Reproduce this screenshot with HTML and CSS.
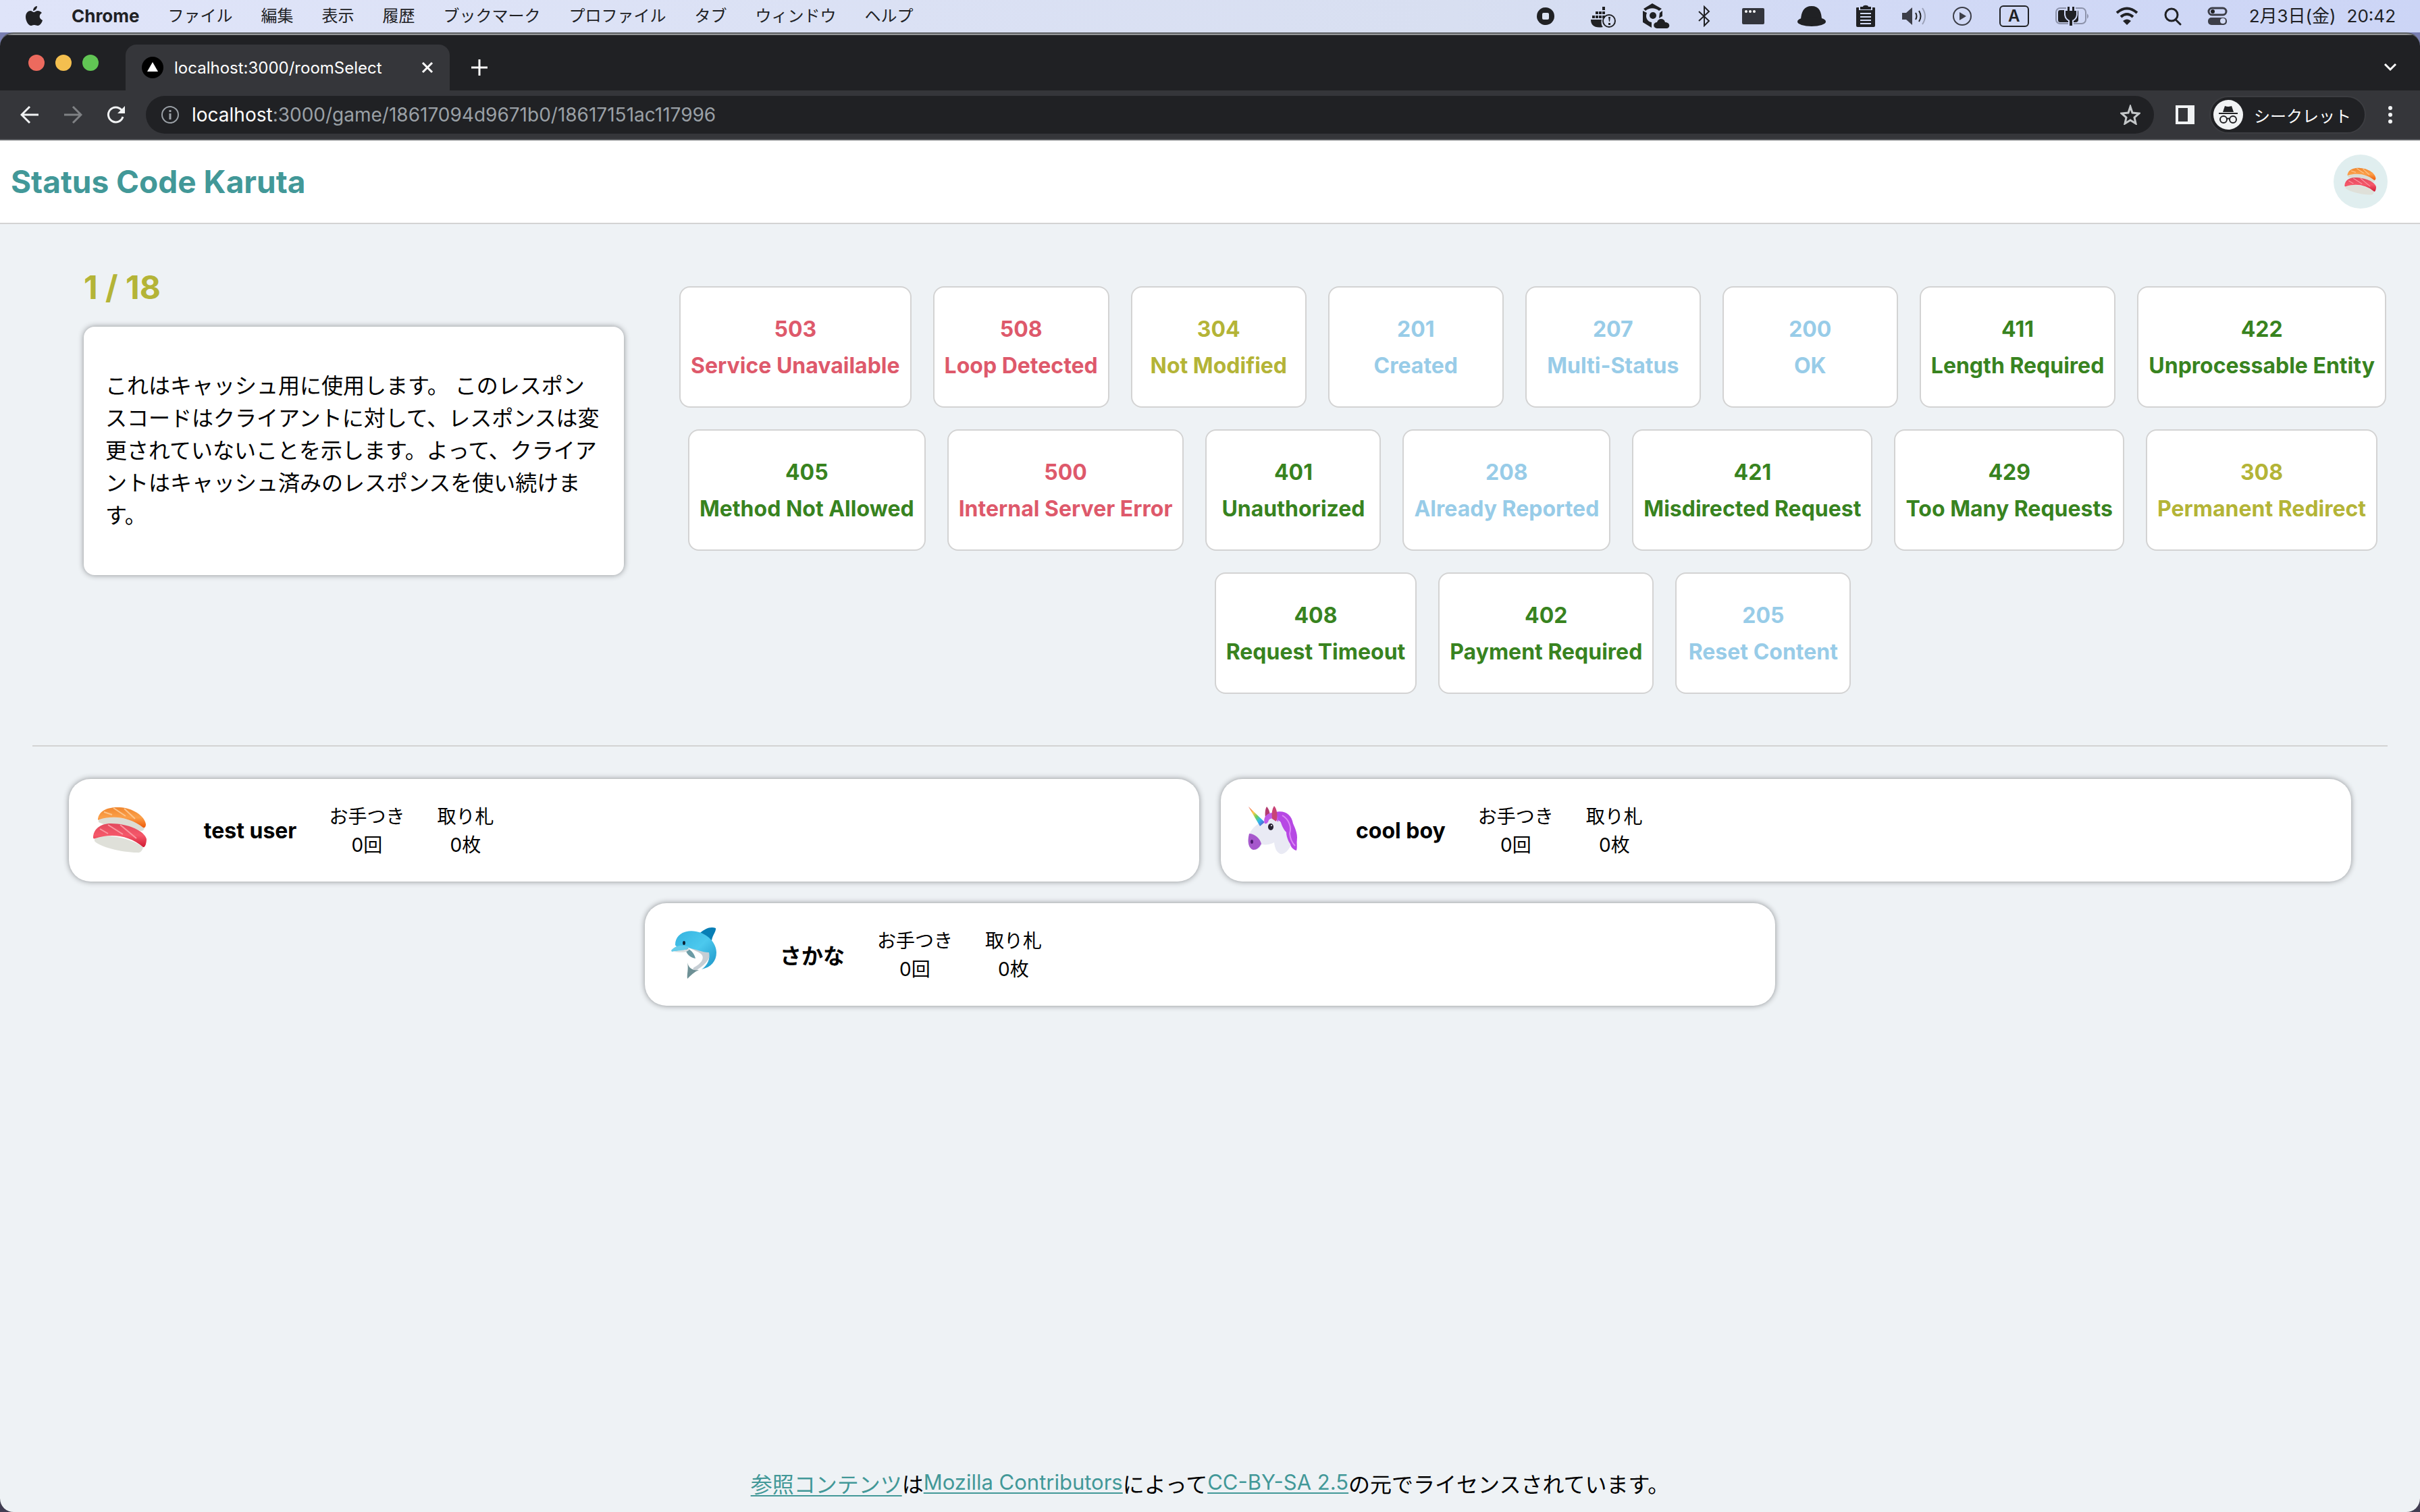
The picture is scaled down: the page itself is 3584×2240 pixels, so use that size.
FILE: index.html
```html
<!DOCTYPE html>
<html lang="ja">
<head>
<meta charset="utf-8">
<title>Status Code Karuta</title>
<link rel="stylesheet" href="styles.css">
</head>
<body>
<svg class="defs" aria-hidden="true">
  <defs>
    <linearGradient id="salmon" x1="0" y1="0" x2="0" y2="1"><stop offset="0" stop-color="#f0862e"/><stop offset=".5" stop-color="#fba04a"/><stop offset="1" stop-color="#ee5a08"/></linearGradient>
    <linearGradient id="tuna" x1="0" y1="0" x2="0" y2="1"><stop offset="0" stop-color="#e2495d"/><stop offset=".5" stop-color="#f5586a"/><stop offset="1" stop-color="#d01a33"/></linearGradient>
    <linearGradient id="horn" x1="0" y1="0" x2="1" y2="1"><stop offset="0" stop-color="#ef5350"/><stop offset=".3" stop-color="#ffca4b"/><stop offset=".5" stop-color="#6ed05a"/><stop offset=".7" stop-color="#2fb9ee"/><stop offset="1" stop-color="#6a35c9"/></linearGradient>
    <linearGradient id="dolphin-skin" x1="0" y1="0" x2="1" y2="1"><stop offset="0" stop-color="#35b3e0"/><stop offset=".5" stop-color="#4cc9ee"/><stop offset="1" stop-color="#1a93c6"/></linearGradient>
    <symbol id="sushi" viewBox="0 0 88 88">
      <path d="M12 26C30 20 66 28 80 38c0 4-1 7-5 7C52 40 22 38 12 32z" fill="#dcdcd4"/>
      <path d="M11 28C12 15 26 9 43 10c19 1 37 12 39 25 0 3-1 6-4 5C60 26 36 21 13 28c-1 1-2 1-2 0z" fill="url(#salmon)"/>
      <path d="M20 17l12 4M34 11l18 12M50 12l16 15" stroke="#fdc48a" stroke-width="2" fill="none"/>
      <path d="M6 55c20-7 56 2 72 14-1 5-4 9-9 8C46 77 12 68 6 60z" fill="#dfe0d9"/>
      <path d="M4 55C4 43 14 34 30 34c26 0 50 11 53 23 0 6-2 13-5 12C58 52 32 48 7 56c-2 1-3 0-3-1z" fill="url(#tuna)"/>
      <path d="M14 42l12 7M26 36l22 14M44 36l24 20" stroke="#fa98a2" stroke-width="2" fill="none"/>
    </symbol>
    <symbol id="unicorn" viewBox="0 0 88 88">
      <path d="M49 17c15-3 24 5 26 17 4 9 8 18 5 28 1 5 1 9 0 12-5-1-9-6-10-12L48 30z" fill="#b648e4"/>
      <path d="M36 9c4 4 6 12 4 20l-6-4c-1-7 0-13 2-16z" fill="#b23b70"/>
      <path d="M28 32C37 25 50 26 56 31c9 12 17 25 15 37-4 7-9 12-15 11-6-3-8-9-9-17-5 3-12 4-18 3-4 6-8 9-13 8-7-2-9-11-7-20C12 43 20 36 28 32z" fill="#e9eaf4"/>
      <path d="M9 9l24 23-7 6z" fill="url(#horn)"/>
      <path d="M10 49c8 0 16 7 18 15-3 6-7 9-12 9-7-2-9-12-6-24z" fill="#a657cc"/>
      <path d="M33 34c-3-9 3-16 13-16 6 3 8 8 7 14-4-6-10-7-14-3-1 4-3 6-6 5z" fill="#c05be8"/>
      <path d="M47 8c4 4 6 14 3 23l-6-4c-1-8 0-15 3-19z" fill="#c94376"/>
      <path d="M53 18c15 0 24 14 22 28 6 8 7 17 4 26-9-5-14-17-14-25-7-7-9-18-12-29z" fill="#b748e4"/>
      <path d="M59 22c10 6 14 17 11 27m0 0c1 9 4 14 8 18" stroke="#dc8af6" stroke-width="2" fill="none"/>
      <ellipse cx="42" cy="39" rx="4" ry="5" fill="#272331"/><circle cx="43" cy="37" r="1" fill="#fff"/>
      <ellipse cx="14" cy="61" rx="2" ry="3" fill="#4d1a70"/>
    </symbol>
    <symbol id="dolphin" viewBox="0 8 88 88">
      <path d="M31 64c2 8 7 12 17 11-7 3-12 8-17 13-1-7 2-14 0-24z" fill="#6d9095"/>
      <path d="M32 41c16-3 25-2 31 5 4 9-2 19-18 29-6 1-7-2-4-4 10-5 16-13 11-19-4-4-12-6-20-11z" fill="#c6ced4"/>
      <path d="M28 42c6 1 13 7 15 16-8-1-15-8-15-16z" fill="#6b9ba5"/>
      <path d="M50 20c7-6 15-10 23-7 1 6-7 12-6 22z" fill="#087eb5"/>
      <path d="M13 38C13 22 28 15 44 18c17 3 30 17 30 31 0 13-8 22-22 25 9-6 13-16 11-25-10 0-20-5-31-7-7-1-15 2-19-4z" fill="url(#dolphin-skin)"/>
      <path d="M7 46c7-8 16-9 27-5-7 8-19 5-26 7z" fill="#65ccea"/>
      <path d="M8 48c10-2 20-2 26-5 0 5-8 7-24 5z" fill="#d9dfe1"/>
      <ellipse cx="26" cy="35" rx="2" ry="3" fill="#0b2233"/>
    </symbol>
  </defs>
</svg>

<header class="menubar">
  <nav class="menubar-menus" aria-label="メニューバー">
    <svg class="apple" width="28" height="32" viewBox="0 0 28 32" role="img" aria-label="Apple"><path d="M19 1c0 4-3 7-6 7 0-4 3-7 6-7zM14 10c2 0 3-2 6-2 2 0 4 1 6 3-5 3-4 9 1 11-1 4-4 8-7 8-2 0-3-1-5-1-3 0-3 1-5 1C6 30 2 23 2 17c0-6 4-9 7-9 2 0 4 2 5 2z" fill="#202124"/></svg>
    <strong>Chrome</strong>
    <span>ファイル</span><span>編集</span><span>表示</span><span>履歴</span><span>ブックマーク</span><span>プロファイル</span><span>タブ</span><span>ウィンドウ</span><span>ヘルプ</span>
  </nav>
  <div class="menubar-status">
    <svg width="54" height="36" viewBox="0 0 54 36"><circle cx="26" cy="18" r="13"/><rect x="21" y="13" width="10" height="10" rx="2" fill="#dbe2f2"/></svg>
    <svg width="38" height="36" viewBox="0 0 38 36"><path d="M18 4h4v5h-4zM8 11h4v4H8zM13 11h4v4h-4zM18 11h4v4h-4zM3 17h4v4H3zM8 17h4v4H8zM13 17h4v4h-4zM18 17h4v4h-4z"/><path d="M1 23h16c-1 5 0 9 2 11C7 36 1 32 1 23z"/><circle cx="28" cy="25" r="9" fill="none" stroke="#202124" stroke-width="2"/><path d="M27 19h3l-1 7h-1zM27 28h3v3h-3z"/></svg>
    <svg width="42" height="38" viewBox="0 0 42 38"><path d="M16 0l14 8-4 3c-6-5-14-5-20 0L3 8zM2 11l6 3c-3 7 1 13 7 14v8L2 28zM31 11v8l-5 3 1-8z"/><circle cx="17" cy="18" r="5"/><path d="M24 37c-8 0-7-9-1-9 2-7 11-6 12 0 8 0 8 9 2 9z"/></svg>
    <svg width="28" height="32" viewBox="0 0 28 32"><path d="M5 9l15 14-7 7V2l7 7L5 23" class="line"/></svg>
    <svg width="40" height="28" viewBox="0 0 40 28"><rect x="3" y="2" width="33" height="24" rx="2" fill="#33353c"/><g fill="#fff"><circle cx="9" cy="7" r="2"/><circle cx="15" cy="7" r="2"/><circle cx="21" cy="7" r="2"/></g></svg>
    <svg width="56" height="32" viewBox="0 0 56 32"><path d="M12 23C12 9 17 1 28 1s15 8 15 22z"/><ellipse cx="28" cy="24" rx="21" ry="7"/></svg>
    <svg width="28" height="34" viewBox="0 0 28 34"><path d="M1 4h3v4h20V4h3q1 0 1 1v26q0 2-2 2H2q-2 0-2-2V5q0-1 1-1z"/><path d="M6 3h4c0-3 8-3 8 0h4v4H6z"/><path d="M6 13h16M6 18h16M6 23h16M6 28h16" stroke="#d3dbf5" stroke-width="2"/></svg>
    <svg width="38" height="30" viewBox="0 0 38 30"><path d="M2 10h6l9-8v26l-9-8H2z" fill="#3c3e48"/><path d="M22 10q3 5 0 10M27 7q5 8 0 16" class="line"/><path d="M32 3q8 12 0 24" class="line pale"/></svg>
    <svg width="32" height="32" viewBox="0 0 32 32"><circle cx="15" cy="16" r="13" fill="none" stroke="#3c3e48" stroke-width="2"/><path d="M11 10l10 6-10 6z" fill="#3c3e48"/></svg>
    <span class="input-source">A</span>
    <svg width="52" height="28" viewBox="0 0 52 28"><rect x="2" y="2" width="44" height="23" rx="6" fill="none" stroke="#8c92aa" stroke-width="2"/><path d="M48 10q4 4 0 8z" fill="#8c92aa"/><path d="M8 5h25q2 0 2 3v11q0 4-4 4H8q-3 0-3-3V8q0-3 3-3z"/><path d="M19 0h3v6h4V0h3v6h3v6q-1 6-6 8v8h-4v-8q-5-2-6-8V6h3z" stroke="#cfd7f5" stroke-width="4" paint-order="stroke"/></svg>
    <svg width="34" height="28" viewBox="0 0 34 28"><path d="M2 9q15-13 30 0M8 15q9-8 18 0" fill="none" stroke="#202124" stroke-width="4"/><path d="M11 21q6-5 12 0l-6 6z"/></svg>
    <svg width="26" height="28" viewBox="0 0 26 28"><circle cx="11" cy="12" r="9" fill="none" stroke="#202124" stroke-width="3"/><path d="M17 19l7 7" stroke="#202124" stroke-width="3" stroke-linecap="round"/></svg>
    <svg width="30" height="30" viewBox="0 0 30 30"><rect x="2" y="3" width="26" height="10" rx="5" fill="none" stroke="#3c3e48" stroke-width="3"/><circle cx="8" cy="8" r="3"/><rect x="1" y="17" width="28" height="11" rx="5" fill="#3c3e48"/><circle cx="23" cy="22" r="4" fill="#d3dbf5"/></svg>
    <time datetime="2023-02-03T20:42"><span>2月3日(金)</span><span>20:42</span></time>
  </div>
</header>

<div class="window">
  <div class="tabstrip">
    <div class="lights"><i class="light red"></i><i class="light yellow"></i><i class="light green"></i></div>
    <div class="tab">
      <svg width="32" height="32" viewBox="0 0 32 32"><circle cx="16" cy="16" r="16" fill="#000"/><path d="M16 8l8 14H8z" fill="#fff"/></svg>
      <span class="tab-title">localhost:3000/roomSelect</span>
      <button class="icon-button" aria-label="タブを閉じる"><svg width="18" height="18" viewBox="0 0 18 18"><path d="M2 2l14 14M16 2L2 16" stroke="#fff" stroke-width="3"/></svg></button>
    </div>
    <button class="icon-button new-tab" aria-label="新しいタブ"><svg width="24" height="24" viewBox="0 0 24 24"><path d="M12 0v24M0 12h24" stroke="#fff" stroke-width="3"/></svg></button>
    <button class="icon-button tab-search" aria-label="タブを検索"><svg width="20" height="14" viewBox="0 0 20 14"><path d="M2 2l8 8 8-8" stroke="#fff" stroke-width="3" fill="none"/></svg></button>
  </div>

  <div class="toolbar">
    <button class="icon-button" aria-label="戻る"><svg width="28" height="28" viewBox="0 0 28 28"><path d="M27 14H3M14 2L2 14l12 12" stroke="#f1f3f4" stroke-width="3" fill="none"/></svg></button>
    <button class="icon-button" aria-label="進む"><svg width="28" height="28" viewBox="0 0 28 28"><path d="M1 14h24M14 2l12 12-12 12" stroke="#7f8184" stroke-width="3" fill="none"/></svg></button>
    <button class="icon-button" aria-label="再読み込み"><svg width="28" height="28" viewBox="0 0 28 28"><path d="M24 17a11 11 0 1 1-2-10" stroke="#f1f3f4" stroke-width="3" fill="none"/><path d="M27 1v11H16z" fill="#f1f3f4"/></svg></button>
    <div class="omnibox">
      <svg width="28" height="28" viewBox="0 0 28 28"><circle cx="14" cy="14" r="12" fill="none" stroke="#9aa0a6" stroke-width="2"/><path d="M14 12v9M14 7v3" stroke="#9aa0a6" stroke-width="3"/></svg>
      <span class="url"><b>localhost</b>:3000/game/18617094d9671b0/18617151ac117996</span>
      <button class="icon-button" aria-label="ブックマーク"><svg width="30" height="30" viewBox="0 0 30 30"><path d="M15 3l3 9 10 1-7 6 2 9-8-5-8 5 2-9-7-6 10-1z" stroke="#c4c7c9" stroke-width="3" fill="none"/></svg></button>
    </div>
    <button class="icon-button side-panel" aria-label="サイドパネル"><svg width="28" height="28" viewBox="0 0 28 28"><path d="M0 0h28v28H0zM4 4v20h14V4z" fill="#f1f3f4" fill-rule="evenodd"/></svg></button>
    <button class="profile">
      <svg width="44" height="44" viewBox="0 0 44 44"><circle cx="22" cy="22" r="22" fill="#f1f3f4"/><path d="M17 9q5 2 10 0l3 9H14zM8 19h28v2H8z" fill="#202124"/><g fill="none" stroke="#202124" stroke-width="2"><circle cx="15" cy="29" r="5"/><circle cx="29" cy="29" r="5"/><path d="M20 28q2-1 4 0"/></g></svg>
      シークレット
    </button>
    <button class="icon-button more" aria-label="メニュー"><svg width="8" height="28" viewBox="0 0 8 28" fill="#f1f3f4"><circle cx="4" cy="4" r="3"/><circle cx="4" cy="14" r="3"/><circle cx="4" cy="24" r="3"/></svg></button>
  </div>

  <div class="page">
    <header class="site-header">
      <h1>Status Code Karuta</h1>
      <button class="avatar" aria-label="ユーザー"><svg width="52" height="52"><use href="#sushi"/></svg></button>
    </header>

    <main>
      <section class="game">
        <div class="question">
          <h2>1 / 18</h2>
          <p>これはキャッシュ用に使用します。 このレスポンスコードはクライアントに対して、レスポンスは変更されていないことを示します。よって、クライアントはキャッシュ済みのレスポンスを使い続けます。</p>
        </div>
        <div class="cards">
          <button class="card s5"><span>503</span><span>Service Unavailable</span></button>
          <button class="card s5"><span>508</span><span>Loop Detected</span></button>
          <button class="card s3"><span>304</span><span>Not Modified</span></button>
          <button class="card s2"><span>201</span><span>Created</span></button>
          <button class="card s2"><span>207</span><span>Multi-Status</span></button>
          <button class="card s2"><span>200</span><span>OK</span></button>
          <button class="card s4"><span>411</span><span>Length Required</span></button>
          <button class="card s4"><span>422</span><span>Unprocessable Entity</span></button>
          <button class="card s4"><span>405</span><span>Method Not Allowed</span></button>
          <button class="card s5"><span>500</span><span>Internal Server Error</span></button>
          <button class="card s4"><span>401</span><span>Unauthorized</span></button>
          <button class="card s2"><span>208</span><span>Already Reported</span></button>
          <button class="card s4"><span>421</span><span>Misdirected Request</span></button>
          <button class="card s4"><span>429</span><span>Too Many Requests</span></button>
          <button class="card s3"><span>308</span><span>Permanent Redirect</span></button>
          <button class="card s4"><span>408</span><span>Request Timeout</span></button>
          <button class="card s4"><span>402</span><span>Payment Required</span></button>
          <button class="card s2"><span>205</span><span>Reset Content</span></button>
        </div>
      </section>

      <section class="players">
        <article class="player">
          <svg class="player-icon" role="img" aria-label="sushi"><use href="#sushi"/></svg>
          <h3>test user</h3>
          <dl><dt>お手つき</dt><dd>0回</dd></dl>
          <dl><dt>取り札</dt><dd>0枚</dd></dl>
        </article>
        <article class="player">
          <svg class="player-icon" role="img" aria-label="unicorn"><use href="#unicorn"/></svg>
          <h3>cool boy</h3>
          <dl><dt>お手つき</dt><dd>0回</dd></dl>
          <dl><dt>取り札</dt><dd>0枚</dd></dl>
        </article>
        <article class="player">
          <svg class="player-icon" role="img" aria-label="dolphin"><use href="#dolphin"/></svg>
          <h3>さかな</h3>
          <dl><dt>お手つき</dt><dd>0回</dd></dl>
          <dl><dt>取り札</dt><dd>0枚</dd></dl>
        </article>
      </section>
    </main>

    <footer><a href="#">参照コンテンツ</a><span>は</span><a href="#" class="latin">Mozilla Contributors</a><span>によって</span><a href="#" class="latin">CC-BY-SA 2.5</a><span>の元でライセンスされています。</span></footer>
  </div>
</div>
</body>
</html>
```
FILE: styles.css
```css
* { box-sizing: border-box; }

body {
  display: flex;
  flex-direction: column;
  min-height: 100vh;
  margin: 0;
  background: linear-gradient(#7a80b4, #413d52);
  color: #000;
  font-family: Inter, "Noto Sans CJK JP", sans-serif;
  font-size: 32px;
}

h1, h2, h3, p, dl, dd { margin: 0; }
button { font: inherit; color: inherit; cursor: pointer; }
svg { display: block; flex: none; }
.defs { position: absolute; width: 0; height: 0; }

.icon-button {
  display: flex;
  padding: 0;
  border: 0;
  background: none;
}

/* System menu bar */
.menubar {
  display: flex;
  align-items: center;
  justify-content: space-between;
  height: 48px;
  padding: 0 36px;
  background: linear-gradient(90deg, #dfe4f9, #d8dff1 60%, #d2daf5 75%, #ccd5f6);
  color: #202124;
  font-size: 24px;
  line-height: 48px;
  white-space: nowrap;
}
.menubar-menus { display: flex; align-items: center; gap: 42px; }
.menubar-menus strong { font-size: 26px; font-weight: 700; }
.menubar-status { display: flex; align-items: center; gap: 38px; fill: #202124; }
.menubar-status time {
  display: flex;
  gap: 16px;
  margin-left: -6px;
  font-size: 26px;
}
.line { fill: none; stroke: #202124; stroke-width: 2; }
.pale { stroke: #9ca2b8; }
.input-source {
  width: 44px;
  border: 2px solid #202124;
  border-radius: 6px;
  font-weight: 600;
  line-height: 28px;
  text-align: center;
}

/* Browser window */
.window {
  display: flex;
  flex: 1;
  flex-direction: column;
  overflow: hidden;
  border-top: 2px solid #5d6063;
  border-radius: 20px;
  background: #202124;
}
.tabstrip {
  display: flex;
  align-items: center;
  height: 84px;
  padding: 0 34px 0 42px;
  border-top: 2px solid #97999b;
}
.lights { display: flex; align-self: flex-start; gap: 16px; margin-top: 29px; }
.light { width: 24px; height: 24px; border-radius: 50%; }
.red { background: #ec6a5e; }
.yellow { background: #f4bf4f; }
.green { background: #61c554; }
.tab {
  display: flex;
  align-items: center;
  align-self: flex-end;
  width: 480px;
  height: 68px;
  margin-left: 40px;
  padding: 0 24px;
  border-radius: 16px 16px 0 0;
  background: #35363a;
  color: #fff;
  font-size: 24px;
}
.tab-title { flex: 1; margin-left: 16px; }
.new-tab { margin: 14px 0 0 32px; }
.tab-search { margin: 14px 0 0 auto; }

.toolbar {
  display: flex;
  align-items: center;
  gap: 36px;
  height: 74px;
  padding: 0 40px 0 30px;
  border-bottom: 2px solid #5f6165;
  background: #35363a;
}
.omnibox {
  display: flex;
  flex: 1;
  align-items: center;
  height: 56px;
  margin-left: -6px;
  padding: 0 20px 0 22px;
  border-radius: 28px;
  background: #202124;
  color: #9aa0a6;
  font-size: 28px;
}
.url { flex: 1; margin-left: 18px; }
.url b { color: #fff; font-weight: 400; }
.side-panel, .more { margin-left: -4px; }
.profile {
  display: flex;
  align-items: center;
  gap: 16px;
  height: 56px;
  margin-left: -14px;
  padding: 0 20px 0 4px;
  border: 2px solid #3c3d41;
  border-radius: 28px;
  background: #202124;
  color: #fff;
  font-size: 24px;
}

/* Application */
.page {
  display: flex;
  flex: 1;
  flex-direction: column;
  background: #eef2f5;
}
.site-header {
  display: flex;
  align-items: center;
  justify-content: space-between;
  height: 124px;
  padding: 0 48px 0 16px;
  border-bottom: 2px solid #d3d3d3;
  background: #fff;
}
.site-header h1 {
  color: #429898;
  font-size: 46px;
  font-weight: 700;
  line-height: 64px;
}
.avatar {
  display: flex;
  align-items: center;
  justify-content: center;
  width: 80px;
  height: 80px;
  padding: 0;
  border: 0;
  border-radius: 50%;
  background: #e0eeef;
}

main { flex: 1; padding: 62px 48px; }
.game {
  display: flex;
  align-items: flex-start;
  gap: 80px;
  padding: 0 0 76px 76px;
  border-bottom: 2px solid #d3d3d3;
}
.question { flex: none; width: 800px; }
.question h2 {
  margin-bottom: 26px;
  color: #b4b437;
  font-size: 48px;
  font-weight: 700;
  line-height: 64px;
}
.question p {
  padding: 64px 32px;
  border-radius: 16px;
  background: #fff;
  box-shadow: 0 0 8px #8a8d90;
  line-height: 48px;
}
.cards {
  display: flex;
  flex: 1;
  flex-wrap: wrap;
  justify-content: center;
  gap: 32px;
  padding-top: 30px;
}
.card {
  display: flex;
  flex-direction: column;
  align-items: center;
  min-width: 260px;
  padding: 35px 15px 33px;
  border: 2px solid #d3d3d3;
  border-radius: 16px;
  background: #fff;
  font-weight: 700;
  line-height: 54px;
  white-space: nowrap;
}
.s2 { color: #98cce8; }
.s3 { color: #b4b437; }
.s4 { color: #38831f; }
.s5 { color: #de596b; }

.players {
  display: flex;
  flex-wrap: wrap;
  justify-content: center;
  gap: 32px;
  padding-top: 48px;
}
.player {
  display: flex;
  align-items: center;
  gap: 48px;
  width: 48%;
  height: 152px;
  padding: 0 32px;
  border-radius: 32px;
  background: #fff;
  box-shadow: 0 0 8px #8a8d90;
}
.player-icon { width: 88px; height: 88px; margin-right: 32px; }
.player h3 { font-size: 32px; font-weight: 700; }
.player dl {
  padding-top: 2px;
  font-size: 28px;
  line-height: 42px;
  text-align: center;
}

footer {
  display: flex;
  align-items: flex-end;
  justify-content: center;
  padding-bottom: 16px;
  line-height: 48px;
}
footer a { color: #429898; text-decoration-thickness: 2px; text-underline-offset: 4px; }
footer .latin { padding-bottom: 4px; font-size: 31px; }
```
